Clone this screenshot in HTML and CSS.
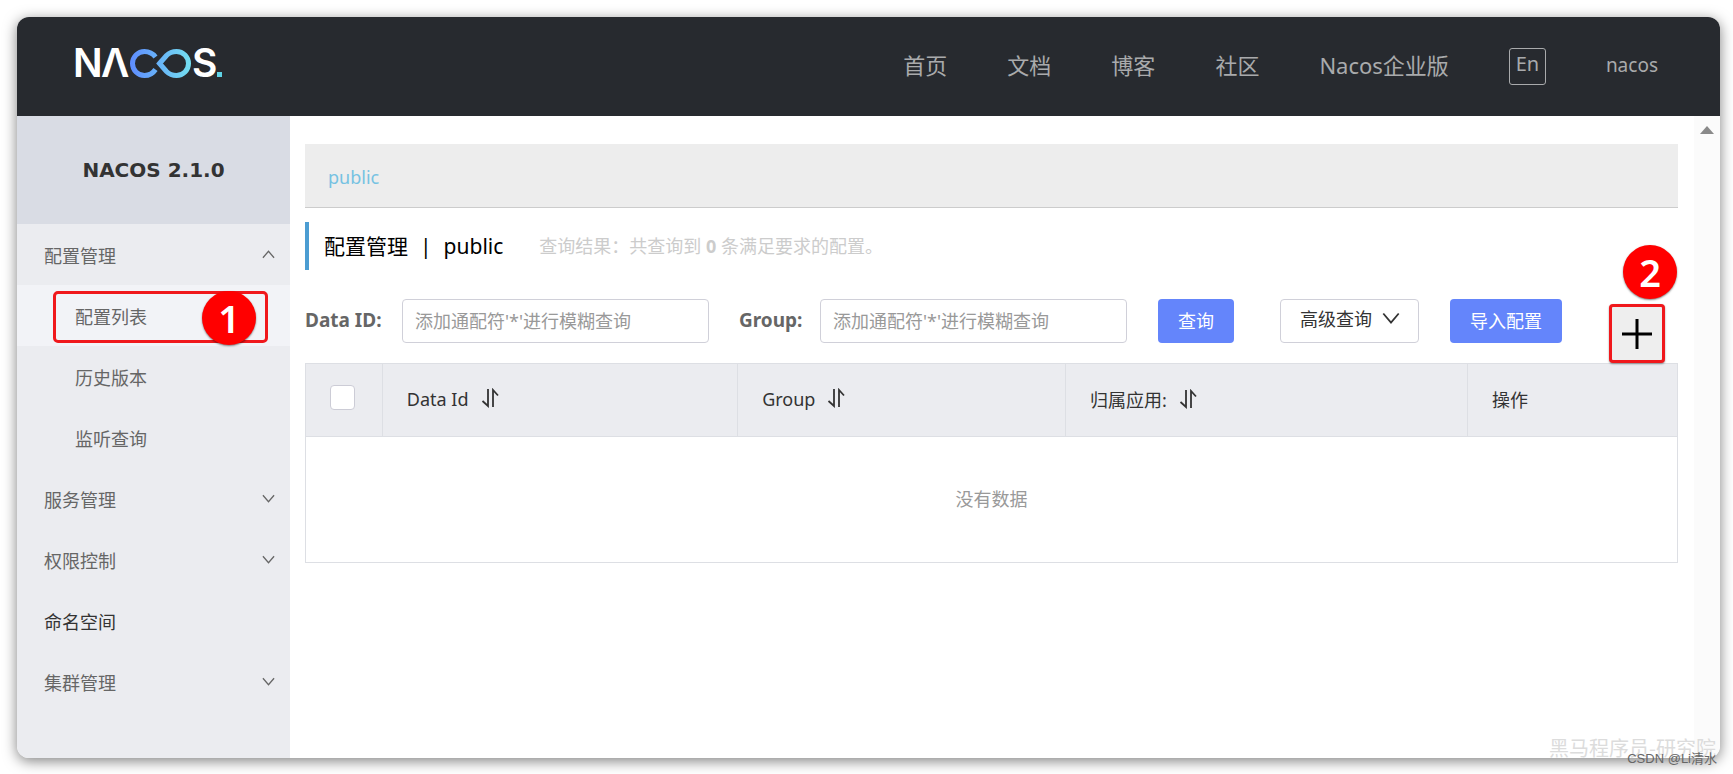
FILE: index.html
```html
<!DOCTYPE html>
<html lang="zh-CN">
<head>
<meta charset="utf-8">
<title>Nacos</title>
<link rel="stylesheet" href="styles.css">
</head>
<body>
<svg class="defs" width="0" height="0" aria-hidden="true">
  <symbol id="chevron" viewBox="0 0 14 9"><path d="M1 1l6 7 6-7" fill="none" stroke="currentColor" stroke-width="1.4"/></symbol>
  <symbol id="sort" viewBox="0 0 18 20"><path d="M7 1v17L1.500 13M12 19V2l5 5.500" fill="none" stroke="currentColor" stroke-width="1.800"/></symbol>
</svg>
<div class="window">
  <header class="topbar">
    <a class="logo" href="#" aria-label="Nacos">
      <svg width="154" height="50" viewBox="-4 -9 154 50">
        <defs><linearGradient id="loop" gradientUnits="userSpaceOnUse" x1="55" y1="0" x2="117" y2="0"><stop offset="0" stop-color="#5e8cff"/><stop offset="1" stop-color="#74e0f0"/></linearGradient></defs>
        <g class="logo-text"><text x="-2" y="30">N</text><text x="26" y="30">Λ</text><text x="117" y="30">S</text></g>
        <path d="M80.500 10C77.500 6 74 4.500 69.500 4.500a12 12 0 0 0 0 24c4.500 0 8-1.500 11-6M84.500 16.500l7-8C94.500 5.500 98 4.500 101.500 4.500a12 12 0 0 1 0 24c-3.500 0-7-1-10-4z" fill="none" stroke="url(#loop)" stroke-width="5"/>
        <rect x="142" y="25" width="5" height="5" fill="#5fd3e6"/>
      </svg>
    </a>
    <nav class="nav">
      <a href="#">首页</a>
      <a href="#">文档</a>
      <a href="#">博客</a>
      <a href="#">社区</a>
      <a href="#">Nacos企业版</a>
      <button class="lang" type="button">En</button>
      <a class="user" href="#">nacos</a>
    </nav>
  </header>
  <div class="body">
    <aside class="sidebar">
      <h1 class="product">NACOS 2.1.0</h1>
      <ul class="menu">
        <li>
          <button class="item" type="button">配置管理<svg class="arrow up"><use href="#chevron"/></svg></button>
          <ul class="submenu">
            <li class="current"><a class="item" href="#">配置列表</a><span class="mark mark-list"></span><span class="badge badge-list">1</span></li>
            <li><a class="item" href="#">历史版本</a></li>
            <li><a class="item" href="#">监听查询</a></li>
          </ul>
        </li>
        <li><button class="item" type="button">服务管理<svg class="arrow"><use href="#chevron"/></svg></button></li>
        <li><button class="item" type="button">权限控制<svg class="arrow"><use href="#chevron"/></svg></button></li>
        <li><a class="item dark" href="#">命名空间</a></li>
        <li><button class="item" type="button">集群管理<svg class="arrow"><use href="#chevron"/></svg></button></li>
      </ul>
    </aside>
    <main class="content">
      <div class="namespaces"><a href="#">public</a></div>
      <div class="heading">
        <h2>配置管理<span class="bar">|</span>public</h2>
        <p>查询结果：共查询到 <b>0</b> 条满足要求的配置。</p>
      </div>
      <form class="filters">
        <label for="data-id">Data ID:</label>
        <input id="data-id" type="text" placeholder="添加通配符'*'进行模糊查询">
        <label class="group-label" for="group">Group:</label>
        <input id="group" type="text" placeholder="添加通配符'*'进行模糊查询">
        <button class="primary query" type="button">查询</button>
        <button class="advanced" type="button">高级查询<svg class="caret"><use href="#chevron"/></svg></button>
        <button class="primary" type="button">导入配置</button>
        <div class="create">
          <button class="add" type="button" aria-label="新建配置"><svg width="32" height="32" viewBox="0 0 32 32"><path d="M16 1v30M1 16h30" stroke="#000" stroke-width="3"/></svg></button>
          <span class="badge badge-add">2</span>
        </div>
      </form>
      <table class="configs">
        <colgroup><col class="c-check"><col class="c-id"><col class="c-group"><col class="c-app"><col></colgroup>
        <thead>
          <tr>
            <th class="check"><input type="checkbox" aria-label="全选"></th>
            <th>Data Id<svg class="sort"><use href="#sort"/></svg></th>
            <th>Group<svg class="sort"><use href="#sort"/></svg></th>
            <th>归属应用:<svg class="sort"><use href="#sort"/></svg></th>
            <th>操作</th>
          </tr>
        </thead>
        <tbody><tr><td colspan="5">没有数据</td></tr></tbody>
      </table>
    </main>
    <div class="scrollbar"><span class="scroll-up"></span></div>
  </div>
</div>
<div class="watermark institute">黑马程序员-研究院</div>
<div class="watermark author">CSDN @Li清水</div>
</body>
</html>
```
FILE: styles.css
```css
* { box-sizing: border-box; }

body {
  margin: 0;
  min-height: 100vh;
  padding: 17px 13px 16px 17px;
  display: flex;
  position: relative;
  background: #fff;
  color: #333;
  font: 18px "Noto Sans", "Noto Sans CJK SC", sans-serif;
}
button, input { font: inherit; }
a { color: inherit; text-decoration: none; }
ul { list-style: none; margin: 0; padding: 0; }
.defs { position: absolute; }

.window {
  flex: 1;
  min-width: 0;
  display: flex;
  flex-direction: column;
  border-radius: 12px;
  overflow: hidden;
  background: #fff;
  box-shadow: 0 3px 14px rgba(0, 0, 0, 0.5);
}

.topbar {
  height: 99px;
  padding: 0 62px 0 54px;
  display: flex;
  align-items: center;
  justify-content: space-between;
  background: #272a2f;
  color: #a9aaac;
}
.logo { display: flex; padding-bottom: 8px; }
.logo-text { fill: #fff; font: 600 39px Inter, sans-serif; }
.nav { display: flex; align-items: center; gap: 60px; font-size: 22px; }
.nav a { padding-bottom: 6px; }
.lang {
  width: 37px;
  height: 37px;
  padding: 0 0 6px;
  border: 1px solid #a9aaac;
  border-radius: 3px;
  background: none;
  color: inherit;
  font-size: 20px;
  line-height: 28px;
}
.nav .user { padding-bottom: 3px; font-size: 19px; }

.body { flex: 1; display: flex; }

.sidebar { width: 273px; flex: none; background: #ebecf0; }
.product {
  margin: 0;
  height: 108px;
  display: flex;
  align-items: center;
  justify-content: center;
  background: #d9dce4;
  font: bold 20px "DejaVu Sans", sans-serif;
}
.item {
  width: 100%;
  height: 61px;
  padding: 0 15px 0 27px;
  display: flex;
  align-items: center;
  justify-content: space-between;
  border: 0;
  background: none;
  color: #666;
}
.item.dark { color: #333; }
.submenu .item { padding-left: 58px; }
.current { position: relative; background: #f2f3f7; }
.arrow { width: 13px; height: 9px; }
.up { transform: rotate(180deg); }

.mark {
  position: absolute;
  border: 3px solid #f0181c;
  border-radius: 5px;
}
.mark-list { left: 36px; right: 22px; top: 6px; height: 52px; }
.badge {
  position: absolute;
  width: 54px;
  height: 54px;
  border-radius: 50%;
  background: #f00;
  color: #fff;
  font: 600 38px/54px "Noto Sans", sans-serif;
  text-align: center;
  box-shadow: 0 1px 2px rgba(0, 0, 0, 0.5);
}
.badge-list { right: 34px; top: 6px; }
.badge-add { right: -12px; bottom: 44px; }

.content { flex: 1; min-width: 0; padding: 28px 16px 0 15px; }
.namespaces {
  height: 64px;
  padding: 2px 23px 0;
  display: flex;
  align-items: center;
  border-bottom: 1px solid #ccc;
  background: #ededed;
  color: #76c2e2;
}
.heading {
  height: 48px;
  margin-top: 14px;
  padding: 0 0 2px 15px;
  display: flex;
  align-items: center;
  gap: 36px;
  border-left: 4px solid #4c9dd2;
}
.heading h2 { margin: 0; color: #000; font-size: 21px; font-weight: 400; }
.heading p { margin: 0; color: #ccc; }
.bar { margin: 0 12px; }

.filters {
  height: 44px;
  margin: 29px 0 20px;
  display: flex;
  align-items: stretch;
}
.filters label {
  width: 97px;
  line-height: 42px;
  color: #666;
  font-size: 19px;
  font-weight: 700;
}
.filters .group-label { width: 81px; margin-left: 30px; }
.filters input {
  flex: 0 1 307px;
  min-width: 0;
  padding: 0 12px;
  border: 1px solid #d0d0d9;
  border-radius: 4px;
  background: #fff;
}
.filters input::placeholder { color: #999; }
.filters button { flex: none; border-radius: 4px; white-space: nowrap; }
.primary { padding: 0 20px 2px; border: 0; background: #6485fb; color: #fff; }
.query { margin-left: 31px; }
.advanced {
  margin: 0 31px 0 46px;
  padding: 0 18px 6px 19px;
  display: flex;
  align-items: center;
  gap: 10px;
  border: 1px solid #d0d0d9;
  background: #fff;
  color: #333;
}
.caret { width: 18px; height: 12px; }
.create { position: relative; margin: 5px 13px 0 auto; }
.add {
  width: 56px;
  height: 59px;
  padding: 0;
  display: flex;
  align-items: center;
  justify-content: center;
  border: 3px solid #f0181c;
  background: #eee;
  box-shadow: 0 1px 2px rgba(0, 0, 0, 0.4);
}

.configs {
  width: 100%;
  table-layout: fixed;
  border-collapse: collapse;
  border: 1px solid #dddfe4;
}
.c-check { width: 5.6%; }
.c-id { width: 25.9%; }
.c-group { width: 23.9%; }
.c-app { width: 29.3%; }
.configs th {
  height: 73px;
  padding: 0 24px 2px;
  border: 1px solid #dddfe4;
  background: #ebecf0;
  font-weight: 400;
  text-align: left;
}
.configs .check input {
  appearance: none;
  display: block;
  width: 25px;
  height: 25px;
  margin: 0 0 4px;
  border: 1px solid #ccccd6;
  border-radius: 4px;
  background: #fff;
}
.sort { width: 18px; height: 20px; margin-left: 12px; vertical-align: -2px; }
.configs td { height: 126px; padding: 0 0 4px; color: #999; text-align: center; }

.scrollbar {
  width: 26px;
  padding-top: 10px;
  display: flex;
  justify-content: center;
  background: #fbfbfb;
}
.scroll-up {
  width: 0;
  height: 0;
  border: 7px solid transparent;
  border-top-width: 0;
  border-bottom: 8px solid #8a8a8a;
}

.watermark { position: absolute; white-space: nowrap; }
.institute {
  right: 17px;
  bottom: 12px;
  color: #dcdcdc;
  font: 20px "Noto Sans CJK SC", sans-serif;
}
.author {
  right: 16px;
  bottom: 7px;
  color: #666;
  font: 13px "Liberation Sans", "Noto Sans CJK SC", sans-serif;
}
```
